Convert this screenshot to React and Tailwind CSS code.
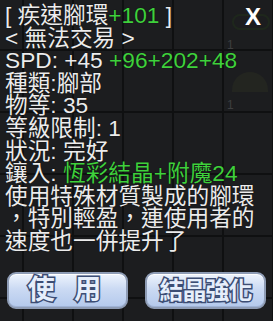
import React from 'react';

const font = { fontFamily: '"Liberation Sans", "Noto Sans CJK TC", sans-serif' };

export default function App() {
  return (
    <div
      className="relative w-[273px] h-[321px] overflow-hidden bg-[#1c1d1f] bg-[linear-gradient(to_right,#0f1011_2px,transparent_2px),linear-gradient(to_bottom,#0f1011_2px,transparent_2px)] bg-[size:50px_62px] bg-[position:22px_49px]"
      style={font}
    >
      {/* faint inventory counts behind the tooltip */}
      <span className="absolute left-[227px] top-[36px] text-[12px] text-[#3e3f40]">1</span>
      <span className="absolute left-[227px] top-[96px] text-[12px] text-[#3e3f40]">1</span>
      <div className="absolute left-[232px] top-[14px] w-[38px] h-[16px] rounded-full border-2 border-[#1f2a1c] opacity-80" />
      <div className="absolute left-[232px] top-[72px] w-[36px] h-[20px] rounded-t-full bg-[#232520]" />

      {/* close */}
      <div className="absolute left-[245px] top-[5px] text-[24px] font-bold leading-none text-white">X</div>

      <div className="relative flex flex-col h-full">
        <div className="pl-[5px] pt-[4px] text-[22.7px] leading-[22.6px] text-[#ececec] [text-shadow:0_0_1px_rgba(0,0,0,0.8)]">
          <div>[ 疾速腳環<span className="text-[#3fd03c]">+101</span> ]</div>
          <div>&lt; 無法交易 &gt;</div>
          <div>SPD: +45 <span className="text-[#3fd03c]">+96+202+48</span></div>
          <div>種類:腳部</div>
          <div>物等: 35</div>
          <div>等級限制: 1</div>
          <div>狀況: 完好</div>
          <div>鑲入: <span className="text-[#3fd03c]">恆彩結晶+附魔24</span></div>
          <div>使用特殊材質製成的腳環</div>
          <div>，特別輕盈，連使用者的</div>
          <div>速度也一併提升了</div>
        </div>

        <div className="mt-auto mb-[12px] flex justify-between px-[7px]">
          <GameButton label="使 用" wide />
          <GameButton label="結晶強化" />
        </div>
      </div>
    </div>
  );
}

function GameButton({ label, wide }) {
  return (
    <div className="w-[121px] h-[37px] rounded-[9px] border-2 border-[#8e9cb5] bg-[linear-gradient(to_bottom,#eef4fd,#cbdaf3_45%,#b4c9ec)] shadow-[inset_0_1px_0_#ffffff,inset_0_-1px_0_#9fb3d6] flex items-center justify-center">
      <span
        className={`font-bold leading-none text-[#e6eefb] [paint-order:stroke_fill] [-webkit-text-stroke:3px_#3c4d74] ${wide ? 'text-[27px] tracking-[6px]' : 'text-[24px] tracking-[-1px]'}`}
      >
        {label}
      </span>
    </div>
  );
}
